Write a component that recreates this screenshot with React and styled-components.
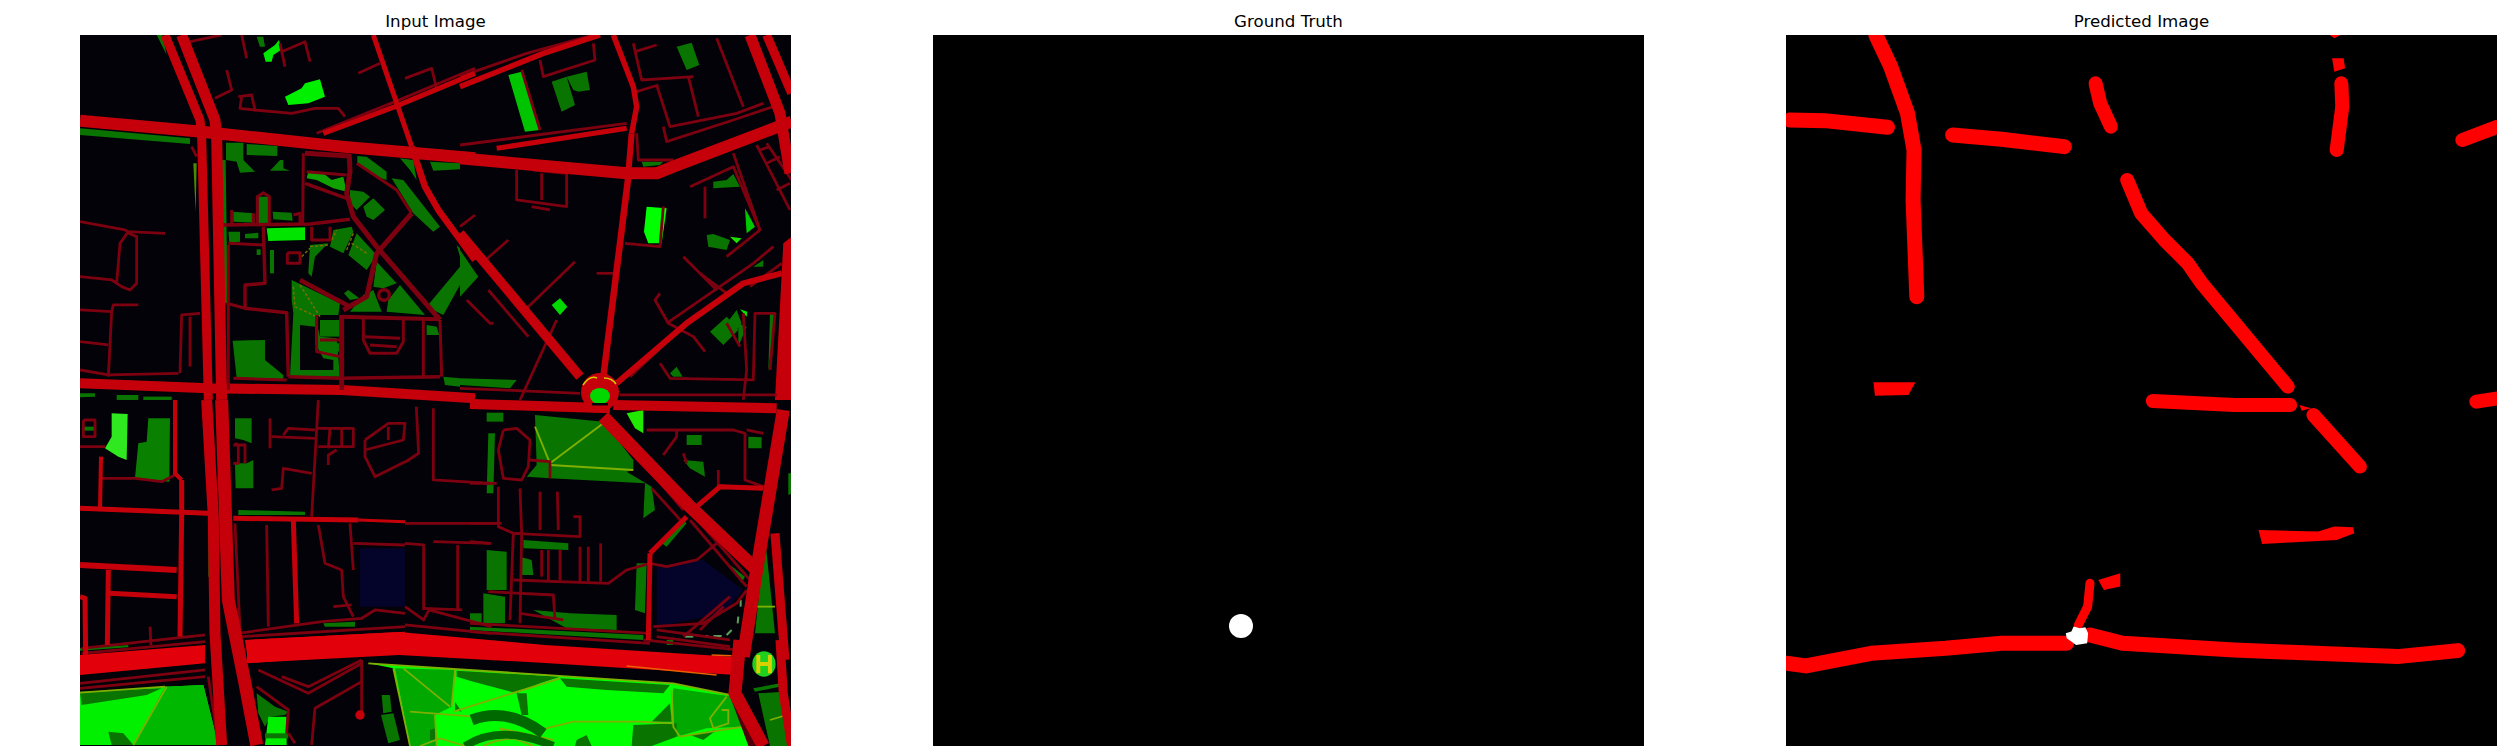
import React from 'react';
import styled, { createGlobalStyle } from 'styled-components';

const MAIN = '#c6000a';
const WIDE = '#e2000a';
const MINOR = '#7c0010';
const DARK = '#0a7400';
const MID = '#00a800';
const LINE = '#7fb000';
const BG = '#020208';

// every block is data read off a 3x crop of the map, dx/dy is where that crop starts on the plot
const blocks = [
  {
    // north west
    dx: -5, dy: -5,
    areas: [
      [DARK, '15,295 345,325 345,342 15,315'],
      ['#4a8a00', '355,400 365,400 362,545'],
      [DARK, '245,15 262,15 275,75'],
      [DARK, '440,390 452,390 458,820 448,820'],
      [DARK, '545,20 565,20 570,50 555,50'],
      ['#00e800', '565,70 600,45 612,30 618,60 595,75 590,95 572,95'],
      ['#00f000', '630,200 680,175 690,160 735,148 750,200 700,220 640,225'],
      [DARK, '125,1095 190,1095 190,1110 125,1110'],
      [DARK, '205,1100 290,1100 290,1110 205,1110'],
      [DARK, '15,1090 60,1090 60,1100 15,1102'],
    ],
    minor: [
      '345,35 440,15', '500,15 515,85', '615,40 630,110', '620,65 690,35 705,95', '455,120 470,180 420,205',
      '490,200 530,195 540,240 650,250 720,235 790,235 810,260', '500,200 495,235 540,240', '850,130 915,100',
      '990,145 1070,115 1085,175', '15,575 150,600 160,605 270,610', '160,605 135,640 125,760 140,770 165,780 185,760 185,620 160,610',
      '15,740 110,750 125,760', '15,840 110,845 115,825 190,825', '110,845 100,1040', '15,935 100,945', '15,1020 100,1035 310,1030',
      '315,1030 320,855 375,850', '345,860 345,1010', '350,350 365,380', '725,310 960,215 1200,115',
    ],
    main: [
      [12, '15,272 380,305 800,350 1200,385'],
      [9, '270,15 375,270 380,320 400,1110'],
      [11, '320,15 420,270 425,320 440,1110'],
      [5, '895,15 1010,350'],
      [6.5, '1010,350 1050,470 1090,540 1200,690'],
      [5, '745,310 960,230 1200,130'],
      [10, '15,1060 400,1075 800,1080 1200,1105'],
    ],
  },
  {
    // north east
    dx: 380, dy: -5,
    areas: [
      ['#00c400', '145,135 185,125 238,300 195,305'],
      [DARK, '275,155 320,140 345,225 305,245'],
      [DARK, '320,140 380,125 390,180 355,185 340,180'],
      [DARK, '650,50 695,38 718,105 680,120'],
      [DARK, '545,395 610,395 600,405 550,410'],
      [DARK, '760,455 800,450 820,432 840,470 760,475'],
      ['#00c800', '855,535 885,590 860,610'],
      [DARK, '740,615 760,612 810,630 800,660 745,650'],
      ['#20e000', '810,620 845,625 830,640'],
      ['#00ff00', '560,530 620,535 605,640 565,640 552,605'],
      ['#00d800', '275,825 300,805 322,830 300,855'],
      [DARK, '750,905 800,860 835,900 790,945'],
      [DARK, '800,880 830,840 845,880 830,900'],
      [DARK, '835,880 860,890 835,950'],
      ['#00e800', '840,838 862,845 860,860'],
      [DARK, '880,710 910,690 910,710'],
      [DARK, '630,1030 650,1010 668,1040 640,1040'],
      [DARK, '930,850 945,855 925,1025'],
      [DARK, '0,1045 170,1050 150,1075 0,1065'],
      [DARK, '0,660 55,740 0,800'],
      [MAIN, '970,640 995,620 995,1110 945,1110'],
    ],
    minor: [
      '240,90 250,140 405,90 400,40', '185,120 240,300', '520,40 545,150 700,140', '590,165 630,290 830,250 910,220',
      '685,140 715,260', '770,25 850,230', '610,290 620,335 820,270 940,230', '530,310 535,390 640,390', '530,185 595,165',
      '525,65 590,45', '170,420 170,510 320,530 320,430 220,420', '245,430 245,510', '215,530 270,540',
      '690,470 820,410 900,600 800,680', '820,370 900,600', '735,470 735,565', '0,590 45,555', '65,700 145,630', '200,835 345,695',
      '20,810 90,880 100,880', '85,780 205,920', '290,870 180,1110', '410,730 460,730', '495,640 600,650 610,530',
      '670,680 770,780', '720,730 800,790', '600,790 585,810 625,880 700,920 735,965', '965,700 870,770', '940,650 880,700 620,880',
      '600,1000 630,1045 880,1050 885,850 945,850 930,1020', '850,850 860,1020 850,1110', '800,880 840,950', '890,345 990,540',
      '920,340 995,450', '900,360 930,350', '920,400 960,380', '950,480 990,460', '0,1075 360,1090', '480,1095 950,1095',
      '0,140 200,70 400,15', '510,1040 700,860', '0,345 500,280',
    ],
    main: [
      [12, '0,385 500,430 590,430 640,410 995,275'],
      [11, '870,15 960,250 990,430'],
      [9, '920,15 995,190'],
      [5.5, '460,15 520,170 530,230 515,310'],
      [6, '515,310 505,430'],
      [6.5, '505,440 430,1040'],
      [9.5, '0,610 360,1040'],
      [6, '470,1060 680,880 850,760 965,730'],
      [5, '110,355 500,295'],
      [5.5, '0,170 250,70 420,15'],
    ],
  },
  {
    // south west
    dx: -5, dy: 365,
    areas: [
      ['#04042a', '855,445 990,445 990,620 855,620'],
      [DARK, '480,55 530,55 530,130 505,120 480,115'],
      [DARK, '480,190 515,190 535,180 535,265 482,265'],
      ['#0a8000', '220,55 285,55 283,245 180,235 190,130 215,125'],
      [DARK, '25,80 58,80 58,92 25,92'],
      ['#30e820', '110,40 158,42 155,180 130,170 90,145 110,110'],
      [DARK, '490,330 690,335 690,345 490,345'],
      [DARK, '400,395 408,395 405,530 400,530'],
      [DARK, '745,670 840,665 840,680 750,680'],
      [DARK, '15,745 160,735 160,742 15,752'],
      ['#00f000', '15,880 270,860 385,855 430,1035 15,1035'],
      ['#00b800', '270,860 385,855 430,1035 175,1035'],
      [DARK, '15,875 260,865 215,885 20,915'],
      [DARK, '100,995 145,1000 175,1035 110,1035'],
      [DARK, '545,880 600,920 640,935 630,945 585,950 570,980 550,940'],
      ['#00f000', '580,950 635,950 635,1035 570,1035'],
      [DARK, '570,1000 640,1000 640,1015 570,1015'],
      [DARK, '920,885 945,885 950,935 925,940'],
      [DARK, '918,945 955,940 975,1020 940,1030'],
    ],
    lines: ['275,860 175,1035', '15,878 270,860'],
    minor: [
      '80,235 180,235 260,245 300,225', '25,60 60,60 60,110 25,110 25,60', '15,140 90,140', '585,55 585,145', '590,110 720,115',
      '625,105 640,85 720,90', '730,0 710,350', '725,85 835,85 835,140 730,140', '765,85 760,145', '800,85 800,140',
      '785,150 760,165 760,195', '870,120 870,170 900,230 990,185', '870,120 940,70 990,70 985,120 870,150', '940,80 940,120',
      '590,270 620,265 625,205 710,220', '575,375 580,680', '480,370 495,690', '730,375 750,490 800,510 805,590 835,650',
      '825,370 835,510', '835,430 990,435', '775,620 830,615', '490,700 740,665 860,655 900,630 990,640', '500,710 990,680',
      '225,680 228,735', '20,745 390,705', '20,760 390,725', '15,850 390,810', '15,865 390,830', '400,830 430,1035',
      '550,810 700,880 860,790', '620,830 700,860 860,780', '860,780 860,940', '710,1035 720,925 860,845', '545,860 640,930 635,1000',
      '480,130 490,135 490,190 475,190', '475,135 510,135 510,190', '640,1000 660,1030',
    ],
    wide: ['15,765 390,735 390,790 15,825', '510,720 990,695 990,755 520,790'],
    main: [
      [11, '395,0 415,350 420,700 440,1035'],
      [13, '440,0 460,600 510,850 545,1035'],
      [5, '15,325 400,340'],
      [6, '15,495 305,510'],
      [5, '105,580 305,590'],
      [5, '100,510 97,735'],
      [5, '320,240 320,350 315,710'],
      [4, '300,0 300,220 320,240'],
      [5, '475,355 850,360'],
      [3, '850,360 990,365'],
      [5, '655,360 665,670'],
      [4, '75,330 78,170'],
      [5, '15,590 30,595 32,765'],
    ],
  },
  {
    // strip between the south west and south east crops, plot coordinates times three
    dx: 0, dy: 0,
    areas: [],
    minor: [
      '1060,1120 1060,1335 1234,1345', '975,1465 1249,1465', '975,1525 1031,1530 1031,1725', '1060,1520 1234,1525',
      '1133,1530 1133,1725', '1031,1720 1147,1725', '975,1715 1031,1755 1047,1725 1234,1775', '975,1770 1234,1795',
      '975,1282 1016,1255 1009,1115',
    ],
  },
  {
    // park along the bottom
    dx: 260, dy: 605,
    areas: [
      ['#00ff00', '85,70 1000,130 1185,170 1230,318 210,318 160,85'],
      [MID, '165,85 345,90 335,200 285,225 290,318 210,318'],
      [MID, '1000,145 1180,170 1210,260 1100,265 1010,290 995,230'],
      [DARK, '350,92 660,110 600,130 530,160 400,125 350,110'],
      [DARK, '660,115 990,135 970,160 800,150 680,140'],
      [DARK, '880,255 1010,250 1010,290 935,318 875,318'],
      [DARK, '1050,285 1130,270 1090,300'],
      [DARK, '530,160 560,160 565,225 545,225'],
      [DARK, '710,300 740,285 755,318 705,318'],
      [DARK, '935,245 990,190 995,245'],
      [DARK, '345,185 365,215 345,210'],
      [DARK, '270,270 285,265 285,300 270,300'],
      [DARK, '1255,160 1330,155 1350,318 1290,318'],
      [DARK, '1240,145 1320,130 1320,140 1245,155'],
      [BG, '1235,35 1310,35 1312,115 1235,118'],
    ],
    lines: [
      '160,85 210,318', '190,85 330,200', '345,90 335,200', '210,215 530,240', '340,215 660,115', '85,70 1000,130 1170,165',
      '285,225 290,318', '995,150 1000,260 1020,290', '1160,170 1110,235 1120,265', '1145,210 1165,210 1165,250 1120,265',
      '1020,290 1210,260', '600,270 700,245 900,245 1000,250', '240,318 300,295 375,318', '530,318 480,265 640,300',
      '1290,240 1340,225',
    ],
    arcs: [
      ['M395 240 Q500 200 610 280', '#006a00', 11],
      ['M375 318 Q480 250 640 318', '#006a00', 8],
      ['M430 318 Q500 280 580 318', LINE, 2],
      ['M470 318 Q510 295 550 318', '#00ff00', 5],
    ],
    wide: ['-279,0 177,-24 615,15 1188,51 1188,105 615,69 177,45 -279,69'],
    main: [
      [9, '1185,170 1240,318', '#500008'],
      [1.5, '860,78 1130,105', '#e86000'],
      [1.5, '1115,45 1175,47', '#e86000'],
      [13, '1200,0 1185,160 1270,318'],
      [9, '1320,0 1330,160 1355,318'],
    ],
    dots: [
      [1272, 72, 35, 38, '#20d020'],
      [60, 225, 14, 14, MAIN],
    ],
    marks: ['M1255 45 V100 M1290 45 V100 M1255 72 H1290'],
  },
  {
    // south east
    dx: 390, dy: 365,
    areas: [
      ['#04042a', '560,500 700,480 820,570 760,640 560,680'],
      [DARK, '50,38 100,38 100,65 50,65'],
      [DARK, '55,100 75,100 70,280 50,280'],
      [DARK, '195,45 400,65 490,180 490,210 470,215 520,245 545,260 555,330 520,355 525,250 440,245 240,235 170,230 200,195'],
      [DARK, '50,450 110,455 110,570 50,570'],
      [DARK, '40,580 105,590 105,670 40,670'],
      [DARK, '160,420 295,430 295,450 160,445'],
      [DARK, '150,470 185,480 190,525 150,525'],
      [DARK, '190,630 300,640 440,645 440,690 290,685'],
      [DARK, '500,490 530,490 525,640 495,630'],
      [DARK, '650,105 695,105 695,135 650,135'],
      [DARK, '835,110 875,112 875,145 835,145'],
      [DARK, '640,180 700,185 705,230 660,205'],
      [DARK, '0,640 35,640 35,670 0,665'],
      [DARK, '885,410 915,700 855,700'],
      [DARK, '0,680 520,705 520,720 0,690'],
      [DARK, '780,495 825,530 815,550'],
      [DARK, '590,720 610,720 610,735 590,735'],
      [DARK, '955,220 965,220 965,280 955,285'],
      [DARK, '575,430 640,360 650,370 590,440'],
      ['#20e800', '470,40 520,30 520,100 495,85'],
    ],
    lines: ['195,80 240,190', '240,190 400,70', '240,195 490,210', '855,620 915,620'],
    minor: [
      '100,90 140,85 180,120 175,200 155,240 100,235 85,150 100,90', '85,260 85,380 130,400 155,400 150,265', '0,370 95,370',
      '0,425 60,430', '130,400 330,410 330,350 310,350', '210,275 210,390', '262,275 265,390', '130,400 120,660',
      '155,400 150,670', '130,540 415,550 470,510 540,490 590,500 680,480 740,430', '0,250 80,250', '215,450 215,530',
      '235,450 235,540', '270,450 270,540', '330,440 330,545', '355,440 355,545', '392,430 392,545',
      '55,575 250,585 255,660', '180,180 240,185 240,235', '530,90 790,90 825,100 825,240 880,260', '830,90 880,100',
      '580,165 620,110 620,90', '640,160 650,190', '745,210 745,260', '510,175 640,330', '530,180 650,320', '545,265 640,370',
      '660,360 830,560', '670,345 840,540', '550,680 700,670 800,610 830,570', '640,710 780,590', '690,690 760,620',
      '560,690 780,720', '560,710 780,740', '0,670 540,700', '0,695 540,730', '520,720 800,750', '150,640 280,660',
    ],
    soft: ['645,710 670,710', '690,708 715,708', '730,708 755,708', '812,600 812,620', '805,650 803,670', '785,690 770,705'],
    main: [
      [5, '540,460 535,720'],
      [5, '540,460 650,350'],
      [5, '680,320 750,260 880,265'],
      [13, '400,50 660,320 860,510'],
      [13, '820,770 860,510 940,30'],
      [9, '915,400 945,780'],
      [10, '0,12 420,25'],
      [10, '430,15 920,25'],
    ],
  },
  {
    // block in the middle
    dx: 120, dy: 95,
    areas: [
      [DARK, '78,38 130,38 130,90 165,125 120,128 110,95 78,90'],
      [DARK, '140,42 232,48 232,78 140,75'],
      [DARK, '240,90 250,90 250,115 270,122 210,122'],
      [DARK, '100,245 160,250 165,278 100,275'],
      [DARK, '175,200 205,200 205,280 175,280'],
      [DARK, '218,245 275,248 278,272 220,268'],
      [DARK, '85,305 120,305 120,335 88,338'],
      [DARK, '135,312 175,308 175,325 135,325'],
      [DARK, '170,358 182,358 182,375 170,375'],
      [DARK, '210,360 222,360 222,430 210,430'],
      ['#10a000', '325,125 370,130 395,150 430,140 440,185 400,175 350,150 320,145'],
      [DARK, '472,78 500,80 560,125 560,150 530,140 472,100'],
      [DARK, '575,145 610,150 720,290 700,305 640,250'],
      [DARK, '600,85 640,90 650,150 630,120'],
      [DARK, '690,95 780,100 780,118 700,122'],
      [DARK, '450,180 490,185 510,200 470,240 450,220'],
      [DARK, '490,230 520,205 555,240 520,270 500,260'],
      [DARK, '400,300 455,290 460,305 430,370 390,350'],
      [DARK, '470,310 530,375 500,420 445,375'],
      [DARK, '330,345 385,340 345,380 335,440 325,430'],
      [DARK, '445,480 478,505 450,510 432,490'],
      [DARK, '530,395 590,460 550,475 520,470'],
      [DARK, '680,530 780,410 780,465 730,555'],
      [DARK, '770,345 780,355 780,380'],
      [DARK, '490,495 520,480 545,545 450,545'],
      [DARK, '560,545 565,510 600,465 675,555'],
      [DARK, '275,450 420,520 415,555 345,555 360,620 410,625 420,740 270,740 280,550 275,510'],
      [DARK, '98,632 195,630 195,690 250,735 250,750 110,745'],
      [DARK, '360,570 420,570 420,620 360,620'],
      [DARK, '375,640 418,640 418,665 375,665'],
      [DARK, '680,585 710,590 718,615 680,615'],
      [DARK, '730,740 780,745 780,770 735,765'],
      [BG, '300,585 345,590 345,640 370,685 400,690 400,720 300,720'],
      ['#00e400', '200,295 315,292 315,330 205,333'],
    ],
    dashes: [
      '280,470 285,530 350,560', '300,465 360,560', '330,350 385,345', '305,380 330,355', '395,330 410,300',
      '460,310 440,360', '455,340 500,370',
    ],
    main: [
      [5, '315,70 448,78 450,125 440,190 460,260 530,350 720,570', MINOR],
      [3, '310,70 308,280', MINOR],
      [3.5, '70,285 330,282 450,268', MINOR],
      [3, '320,125 440,135', MINOR],
      [3.5, '315,160 440,205', MINOR],
      [3, '172,285 172,200 190,188 208,200 208,280', MINOR],
      [3, '95,240 95,285', MINOR],
      [3, '280,255 300,250 300,282', MINOR],
      [3, '160,250 160,285', MINOR],
      [3, '85,340 190,345', MINOR],
      [3.5, '190,290 195,460 135,465 135,535 260,548 265,740', MINOR],
      [3, '262,368 300,368 300,400 262,400 262,368', MINOR],
      [4.5, '300,450 450,530', MINOR],
      [5, '430,540 500,500 530,370 635,250', MINOR],
      [3, '335,290 335,330 390,330 390,290', MINOR],
      [5, '425,555 425,780', MINOR],
      [4, '425,560 720,568', MINOR],
      [3, '490,565 490,630 510,670 590,670 610,635 610,568', MINOR],
      [3, '495,620 600,625', MINOR],
      [3, '510,645 590,650', MINOR],
      [3, '350,555 350,665 420,680', MINOR],
      [3, '360,630 418,630', MINOR],
      [3.5, '265,740 420,745 720,740', MINOR],
      [3, '720,570 725,740', MINOR],
      [3, '670,570 670,740', MINOR],
      [3, '100,745 260,750', MINOR],
      [3, '80,520 135,535', MINOR],
      [3, '85,345 85,780', MINOR],
      [3, '470,100 590,180 635,250', MINOR],
    ],
    dots: [[552, 495, 16, 16, BG, MINOR]],
  },
];

const predictedStrokes = [
  [15, '230,105 262,200 298,340 312,450 310,600 318,890'],
  [15, '45,360 120,362 255,382'],
  [15, '395,405 500,418 635,440'],
  [14, '702,250 712,310 735,380'],
  [14, '1230,250 1232,320 1220,450'],
  [14, '1490,420 1566,380'],
  [14, '770,540 800,640 850,720 900,790 930,850 1115,1160'],
  [14, '825,1203 1000,1215 1120,1215'],
  [14, '1170,1245 1270,1400'],
  [14, '1520,1205 1566,1195'],
  [9, '690,1750 685,1820 665,1875'],
  [15, '37,1990 80,1998 220,1960 380,1945 500,1930 640,1930'],
  [15, '690,1905 760,1930 1000,1950 1350,1970 1480,1952'],
];

const predictedBlobs = [
  '225,1147 315,1147 300,1185 228,1187',
  '1052,1590 1180,1595 1215,1580 1255,1582 1258,1600 1220,1620 1060,1632',
  '708,1740 755,1720 755,1760 720,1770',
  '1210,175 1235,175 1238,205 1215,215',
  '1205,105 1228,105 1215,115',
  '1140,1215 1165,1225 1145,1232',
];

const GlobalStyle = createGlobalStyle`
  html, body {
    margin: 0;
    background: #fff;
  }
`;

const Figure = styled.div`
  display: flex;
  gap: 142px;
  width: 2500px;
  height: 750px;
  padding-left: 80px;
  box-sizing: border-box;
  overflow: hidden;
`;

const Panel = styled.div`
  display: flex;
  flex-direction: column;
  width: 711px;
  flex: none;
`;

const Title = styled.div`
  height: 35px;
  line-height: 43px;
  text-align: center;
  font-family: "DejaVu Sans", sans-serif;
  font-size: 16.67px;
  color: #000;
`;

const Plot = styled.svg`
  display: block;
  width: 711px;
  height: 711px;
  background: ${({ $bg }) => $bg};
  filter: blur(${({ $blur }) => $blur}px);
`;

const Road = ({ d, w, color, dash, cap }) => (
  <polyline
    points={d}
    fill="none"
    stroke={color}
    strokeWidth={w}
    strokeDasharray={dash}
    strokeLinecap={cap}
    strokeLinejoin="round"
    vectorEffect="non-scaling-stroke"
  />
);

const Layer = ({ block, children }) => (
  <g transform={`translate(${block.dx} ${block.dy}) scale(0.3333)`}>{children(block)}</g>
);

const InputMap = () => (
  <Plot viewBox="0 0 711 711" $bg={BG} $blur={0.5}>
    {blocks.map((b, i) => (
      <Layer key={i} block={b}>
        {({ areas, lines = [], arcs = [], soft = [], dashes = [] }) => (
          <>
            {areas.map(([c, p], k) => <polygon key={k} points={p} fill={c} />)}
            {lines.map((p, k) => <Road key={k} d={p} w={1.8} color={LINE} />)}
            {arcs.map(([d, c, w], k) => (
              <path key={k} d={d} fill="none" stroke={c} strokeWidth={w} vectorEffect="non-scaling-stroke" />
            ))}
            {dashes.map((p, k) => <Road key={k} d={p} w={1.4} color="#7a7000" dash="3 2" />)}
            {soft.map((p, k) => <Road key={k} d={p} w={2} color="#5aa05a" />)}
          </>
        )}
      </Layer>
    ))}
    {blocks.map((b, i) => (
      <Layer key={i} block={b}>
        {({ minor = [] }) => minor.map((p, k) => <Road key={k} d={p} w={2.8} color={MINOR} />)}
      </Layer>
    ))}
    {blocks.map((b, i) => (
      <Layer key={i} block={b}>
        {({ wide = [] }) => wide.map((p, k) => <polygon key={k} points={p} fill={WIDE} />)}
      </Layer>
    ))}
    {blocks.map((b, i) => (
      <Layer key={i} block={b}>
        {({ main = [] }) => main.map(([w, p, c], k) => <Road key={k} d={p} w={w} color={c || MAIN} />)}
      </Layer>
    ))}
    {blocks.map((b, i) => (
      <Layer key={i} block={b}>
        {({ dots = [], marks = [] }) => (
          <>
            {dots.map(([cx, cy, rx, ry, fill, stroke], k) => (
              <ellipse key={k} cx={cx} cy={cy} rx={rx} ry={ry} fill={fill} stroke={stroke} strokeWidth={stroke ? 3.5 : 0} vectorEffect="non-scaling-stroke" />
            ))}
            {marks.map((d, k) => (
              <path key={k} d={d} stroke="#d8d000" strokeWidth="4" vectorEffect="non-scaling-stroke" />
            ))}
          </>
        )}
      </Layer>
    ))}
    {/* the round junction where the diagonals meet */}
    <g transform="translate(520 357)">
      <circle r="19" fill={MAIN} />
      <ellipse cx="0" cy="4" rx="10" ry="8" fill="#00d800" />
      <rect x="-8" y="11" width="16" height="2.5" fill={BG} />
      <path d="M-17 -7 Q-10 -17 -3 -14 M4 -14 Q12 -14 16 -8" fill="none" stroke="#d8c800" strokeWidth="1.5" />
    </g>
  </Plot>
);

const TruthMask = () => (
  <Plot viewBox="0 0 711 711" $bg="#000" $blur={0.3}>
    <circle cx="308" cy="591" r="12" fill="#fff" />
  </Plot>
);

const PredictedMask = () => (
  <Plot viewBox="0 0 711 711" $bg="#000" $blur={0.3}>
    <g transform="scale(0.4655 0.3333) translate(-37 -105)">
      {predictedStrokes.map(([w, p], i) => <Road key={i} d={p} w={w} color="#ff0000" cap="round" />)}
      {predictedBlobs.map((p, i) => <polygon key={i} points={p} fill="#ff0000" />)}
      <polygon
        points="638,1900 650,1895 655,1880 668,1885 680,1882 686,1900 684,1930 660,1935 650,1925 640,1915"
        fill="#fff"
      />
    </g>
  </Plot>
);

export default function App() {
  return (
    <>
      <GlobalStyle />
      <Figure>
        <Panel>
          <Title>Input Image</Title>
          <InputMap />
        </Panel>
        <Panel>
          <Title>Ground Truth</Title>
          <TruthMask />
        </Panel>
        <Panel>
          <Title>Predicted Image</Title>
          <PredictedMask />
        </Panel>
      </Figure>
    </>
  );
}
